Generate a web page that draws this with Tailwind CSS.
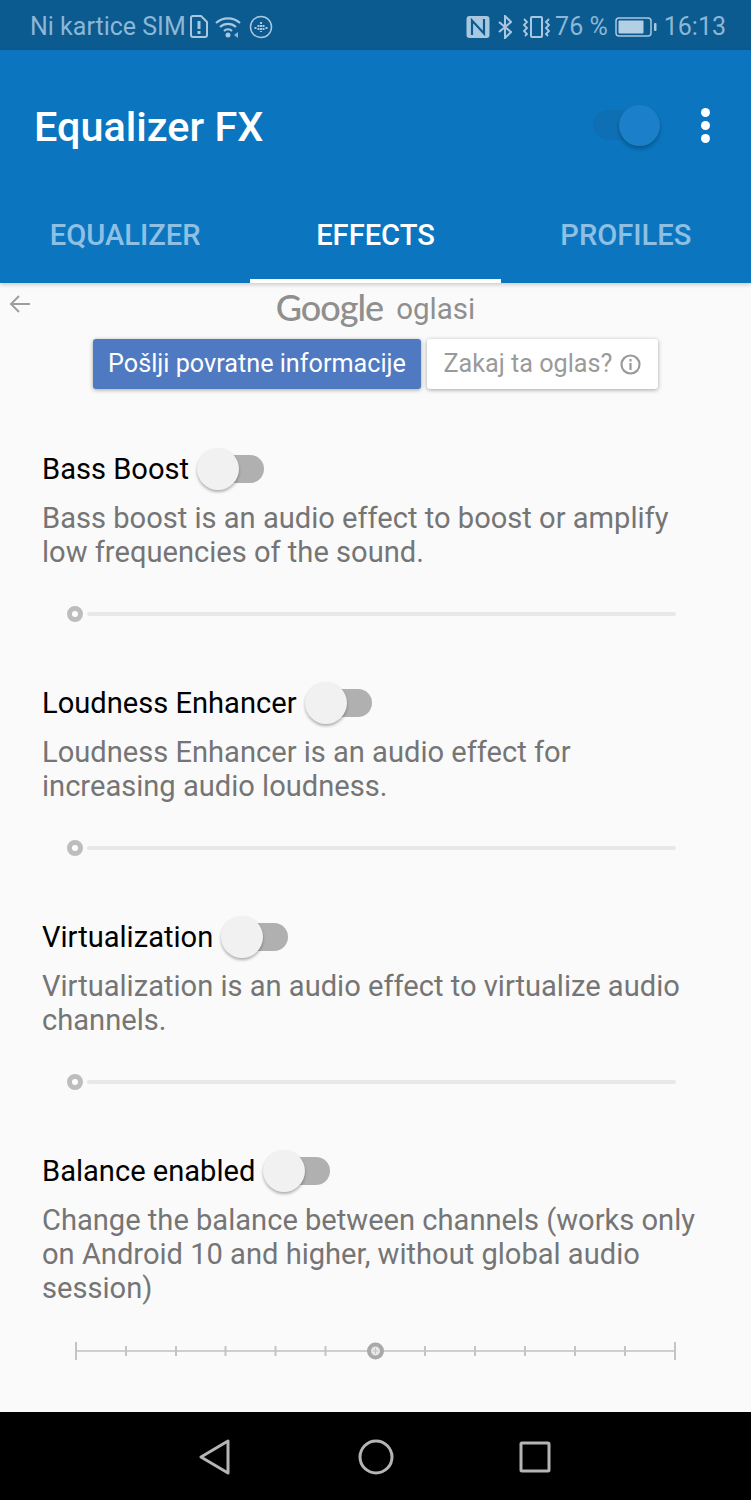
<!DOCTYPE html>
<html lang="en">
<head>
  <meta charset="UTF-8">
  <meta name="viewport" content="width=device-width, initial-scale=1.0">
  <title>Equalizer FX</title>
  <script src="https://cdn.jsdelivr.net/npm/@tailwindcss/browser@4"></script>
</head>
<body class="bg-[#fafafa] font-['Roboto',sans-serif]">
  <div class="w-[751px] h-[1500px] flex flex-col overflow-hidden">

    <!-- status bar -->
    <div class="h-[50px] shrink-0 bg-[#0b5a90] text-[#8db7d5] flex items-center justify-between pt-[3px] pl-[30px] pr-[25px] text-[25px]">
      <div class="flex items-center">
        <span>Ni kartice SIM</span>
        <svg class="ml-[4px]" width="18" height="23" viewBox="0 0 18 23" fill="none" stroke="#a9c8df" stroke-width="2"><path d="M1 3a2 2 0 0 1 2-2h8l6 6v13a2 2 0 0 1-2 2H3a2 2 0 0 1-2-2z"/><path d="M9 6v8M9 16v3" stroke-width="3"/></svg>
        <svg class="ml-[7px]" width="28" height="24" viewBox="0 0 28 24" fill="none" stroke="#a9c8df" stroke-width="2.200"><path d="M1 8a18 18 0 0 1 24 0M5 12a12 12 0 0 1 16 0M9 16a6 6 0 0 1 8 0"/><circle cx="13" cy="20" r="2.500" fill="#a9c8df" stroke="none"/><path d="M19 20l4-3v6z" fill="currentColor" stroke="none"/></svg>
        <svg class="ml-[6px]" width="24" height="24" viewBox="0 0 24 24" fill="none" stroke="#a9c8df"><circle cx="12" cy="12" r="10.500" stroke-width="1.500"/><path d="M6.500 12v3M9.500 10v6M12 7v10M14.500 10v6M17.500 12v3" stroke-width="2" stroke-dasharray="2 1"/></svg>
      </div>
      <div class="flex items-center">
        <svg width="24" height="24" viewBox="0 0 24 24" fill="none"><rect x="0.500" y="1" width="23" height="22" rx="3" fill="#a9c8df"/><path d="M6 20V5.500l12 13V4" stroke="#0b5a90" stroke-width="2.200"/></svg>
        <svg class="ml-[8px]" width="14" height="24" viewBox="0 0 14 24" fill="none" stroke="#a9c8df" stroke-width="2"><path d="M1 7l12 10-6 6V1l6 6L1 17"/></svg>
        <svg class="ml-[9px]" width="31" height="24" viewBox="0 0 31 24" fill="none" stroke="#a9c8df" stroke-width="2"><rect x="10" y="2" width="11" height="20" rx="1"/><path d="M3 4l3 3-3 3 3 3-3 3 3 3-2 2M28 4l-3 3 3 3-3 3 3 3-3 3 2 2" stroke-width="1.800"/></svg>
        <span class="ml-[3px]">76 %</span>
        <svg class="ml-[7px]" width="42" height="20" viewBox="0 0 42 20"><rect x="1" y="1" width="35" height="18" rx="3" fill="none" stroke="#a9c8df" stroke-width="1.500"/><rect x="3.500" y="3.500" width="25" height="13" rx="1" fill="#b3cfe3"/><rect x="39" y="6" width="2.500" height="8" rx="1" fill="#a9c8df"/></svg>
        <span class="ml-[7px]">16:13</span>
      </div>
    </div>

    <!-- app bar -->
    <div class="h-[233px] shrink-0 bg-[#0b76bf] shadow-[0_2px_4px_rgba(0,0,0,0.18)] flex flex-col relative z-10">
      <div class="h-[152px] flex items-center justify-between pl-[34px] pr-[41px]">
        <h1 class="text-white text-[41.4px] font-medium mt-[2px]">Equalizer FX</h1>
        <div class="flex items-center gap-[40px] mb-[2px]">
          <div class="relative w-[68px] h-[30px] rounded-full bg-[#0f6fb4]">
            <div class="absolute right-[1px] top-[-5px] w-[41px] h-[41px] rounded-full bg-[#1b80c9] shadow-[0_3px_4px_rgba(0,0,0,0.25)]"></div>
          </div>
          <div class="flex flex-col gap-[4px]">
            <span class="w-[9px] h-[9px] rounded-full bg-white"></span>
            <span class="w-[9px] h-[9px] rounded-full bg-white"></span>
            <span class="w-[9px] h-[9px] rounded-full bg-white"></span>
          </div>
        </div>
      </div>
      <div class="flex flex-1 text-[29.1px] font-medium">
        <div class="flex-1 flex items-center justify-center pb-[9px] text-[#8fc0e4] border-b-4 border-transparent">EQUALIZER</div>
        <div class="flex-1 flex items-center justify-center pb-[9px] text-white border-b-4 border-white">EFFECTS</div>
        <div class="flex-1 flex items-center justify-center pb-[9px] text-[#8fc0e4] border-b-4 border-transparent">PROFILES</div>
      </div>
    </div>

    <!-- content -->
    <div class="flex-1 relative">
      <svg class="absolute left-[9px] top-[11px] text-[#9e9e9e]" width="22" height="20" viewBox="0 0 22 20" fill="none" stroke="currentColor" stroke-width="2"><path d="M21 10H2M10 2l-8 8 8 8"/></svg>

      <!-- ad header -->
      <div class="h-[56px] flex items-center justify-center text-[#8f8f8f] pb-[3px]">
        <span class="text-[36px] font-['Lato',sans-serif] font-medium tracking-[-1px] leading-none mb-[5px]">Google</span>
        <span class="text-[29.5px] ml-[13px]">oglasi</span>
      </div>
      <div class="flex justify-start pl-[93px] gap-[6px] text-[25.2px]">
        <div class="w-[328px] h-[50px] bg-[#4f79c0] text-white rounded-[3px] flex items-center justify-center shadow-[0_1px_4px_rgba(0,0,0,0.35)]">Pošlji povratne informacije</div>
        <div class="w-[231px] h-[50px] bg-white text-[#9a9a9a] rounded-[3px] flex items-center justify-center gap-[8px] shadow-[0_1px_4px_rgba(0,0,0,0.35)]">
          <span>Zakaj ta oglas?</span>
          <svg width="21" height="21" viewBox="0 0 21 21" fill="none" stroke="currentColor" stroke-width="2.200"><circle cx="10.500" cy="10.500" r="9"/><path d="M10.500 9v7M10.500 5v2.500"/></svg>
        </div>
      </div>

      <!-- effects -->
      <div class="pl-[42px] pr-[40px] pt-[59px]">

        <section class="h-[234px]">
          <div class="h-[44px] flex items-center text-[29.1px] text-black">
            <span>Bass Boost</span>
            <div class="relative ml-[16px] mb-[3px] w-[59px] h-[28px] rounded-full bg-[#b0b0b0]">
              <div class="absolute left-[-8px] top-[-7px] w-[42px] h-[42px] rounded-full bg-[#f1f1f1] shadow-[0_2px_3px_rgba(0,0,0,0.3)]"></div>
            </div>
          </div>
          <p class="mt-[9px] text-[29.1px] leading-[34px] text-[#757575]">Bass boost is an audio effect to boost or amplify low frequencies of the sound.</p>
          <div class="flex items-center mt-[37px] pl-[25px] w-[634px]">
            <span class="w-[16px] h-[16px] rounded-full border-[5px] border-[#bdbdbd] bg-white"></span>
            <span class="ml-[4px] flex-1 h-[4px] bg-[#e8e8e8] rounded-full"></span>
          </div>
        </section>

        <section class="h-[234px]">
          <div class="h-[44px] flex items-center text-[29.1px] text-black">
            <span>Loudness Enhancer</span>
            <div class="relative ml-[16px] mb-[3px] w-[59px] h-[28px] rounded-full bg-[#b0b0b0]">
              <div class="absolute left-[-8px] top-[-7px] w-[42px] h-[42px] rounded-full bg-[#f1f1f1] shadow-[0_2px_3px_rgba(0,0,0,0.3)]"></div>
            </div>
          </div>
          <p class="mt-[9px] text-[29.1px] leading-[34px] text-[#757575]">Loudness Enhancer is an audio effect for<br>increasing audio loudness.</p>
          <div class="flex items-center mt-[37px] pl-[25px] w-[634px]">
            <span class="w-[16px] h-[16px] rounded-full border-[5px] border-[#bdbdbd] bg-white"></span>
            <span class="ml-[4px] flex-1 h-[4px] bg-[#e8e8e8] rounded-full"></span>
          </div>
        </section>

        <section class="h-[234px]">
          <div class="h-[44px] flex items-center text-[29.1px] text-black">
            <span>Virtualization</span>
            <div class="relative ml-[16px] mb-[3px] w-[59px] h-[28px] rounded-full bg-[#b0b0b0]">
              <div class="absolute left-[-8px] top-[-7px] w-[42px] h-[42px] rounded-full bg-[#f1f1f1] shadow-[0_2px_3px_rgba(0,0,0,0.3)]"></div>
            </div>
          </div>
          <p class="mt-[9px] text-[29.1px] leading-[34px] text-[#757575]">Virtualization is an audio effect to virtualize audio channels.</p>
          <div class="flex items-center mt-[37px] pl-[25px] w-[634px]">
            <span class="w-[16px] h-[16px] rounded-full border-[5px] border-[#bdbdbd] bg-white"></span>
            <span class="ml-[4px] flex-1 h-[4px] bg-[#e8e8e8] rounded-full"></span>
          </div>
        </section>

        <section>
          <div class="h-[44px] flex items-center text-[29.1px] text-black">
            <span>Balance enabled</span>
            <div class="relative ml-[16px] mb-[3px] w-[59px] h-[28px] rounded-full bg-[#b0b0b0]">
              <div class="absolute left-[-8px] top-[-7px] w-[42px] h-[42px] rounded-full bg-[#f1f1f1] shadow-[0_2px_3px_rgba(0,0,0,0.3)]"></div>
            </div>
          </div>
          <p class="mt-[9px] text-[29.1px] leading-[34px] text-[#757575]">Change the balance between channels (works only on Android 10 and higher, without global audio session)</p>
          <svg class="mt-[36px] ml-[33px]" width="601" height="20" viewBox="0 0 601 20" fill="none">
            <path d="M1 10h599" stroke="#cfcfcf" stroke-width="2"/>
            <path d="M1 1v18M600 1v18" stroke="#c4c4c4" stroke-width="2"/>
            <path d="M51 5v10M101 5v10M150.500 5v10M200.500 5v10M250.500 5v10M350 5v10M400 5v10M450 5v10M500 5v10M550 5v10" stroke="#c4c4c4" stroke-width="2"/>
            <circle cx="300.500" cy="10" r="6.500" fill="#e8e8e8" stroke="#a9a9a9" stroke-width="4"/>
            <path d="M300.500 7v6M297.500 10h6" stroke="#c4c4c4"/>
          </svg>
        </section>
      </div>
    </div>

    <!-- navigation bar -->
    <div class="h-[88px] shrink-0 bg-black flex items-center justify-center gap-[127px] pt-[2px] pr-[2px] text-[#b5b5b5]">
      <svg width="32" height="36" viewBox="0 0 32 36" fill="none" stroke="currentColor" stroke-width="3" stroke-linejoin="round"><path d="M29 2v32L2 18z"/></svg>
      <svg width="36" height="36" viewBox="0 0 36 36" fill="none" stroke="currentColor" stroke-width="3"><circle cx="18" cy="18" r="16"/></svg>
      <svg class="-ml-[2px]" width="32" height="32" viewBox="0 0 32 32" fill="none" stroke="currentColor" stroke-width="3" stroke-linejoin="round"><rect x="2" y="2" width="28" height="28" rx="1"/></svg>
    </div>
  </div>
</body>
</html>
